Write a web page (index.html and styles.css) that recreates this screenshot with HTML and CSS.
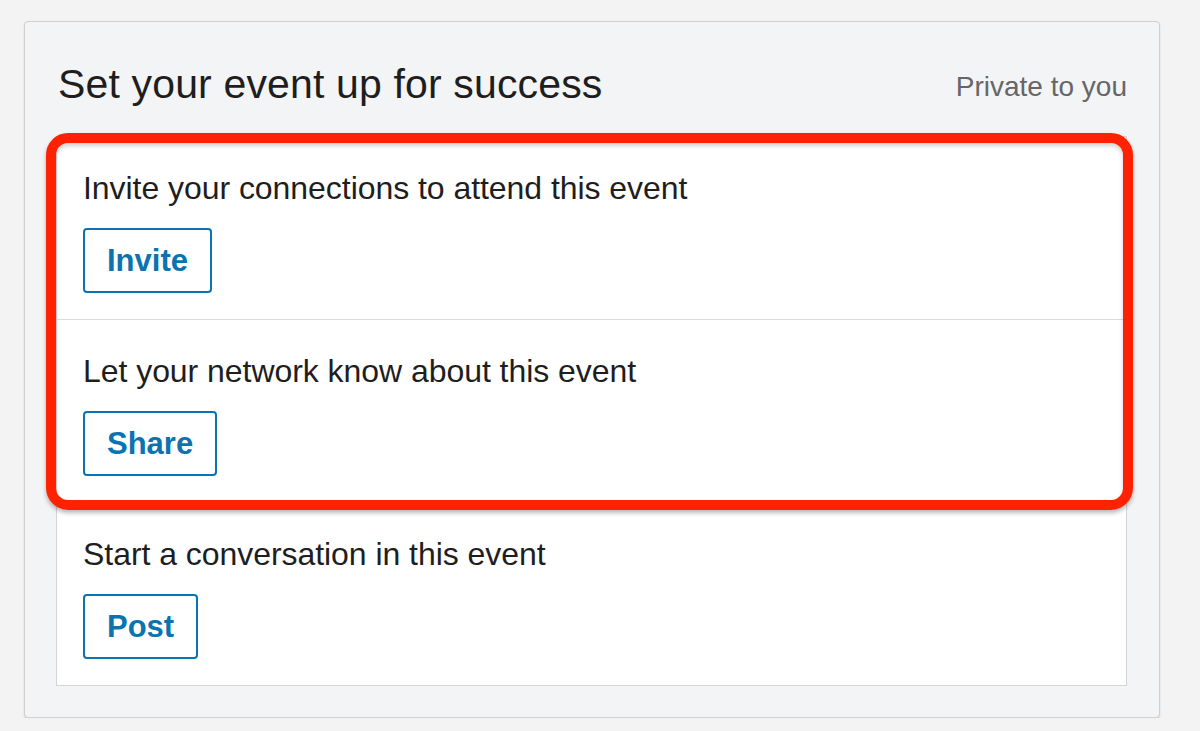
FILE: index.html
```html
<!DOCTYPE html>
<html lang="en">
<head>
<meta charset="utf-8">
<title>Set your event up for success</title>
<link rel="stylesheet" href="styles.css">
</head>
<body>
  <section class="card">
    <header class="card-head">
      <h2 class="card-title">Set your event up for success</h2>
      <span class="card-note">Private to you</span>
    </header>
    <div class="list">
      <div class="highlight" aria-hidden="true"></div>
      <div class="row">
        <p class="row-text">Invite your connections to attend this event</p>
        <button class="btn">Invite</button>
      </div>
      <div class="row">
        <p class="row-text">Let your network know about this event</p>
        <button class="btn">Share</button>
      </div>
      <div class="row">
        <p class="row-text">Start a conversation in this event</p>
        <button class="btn">Post</button>
      </div>
    </div>
  </section>
</body>
</html>
```

FILE: styles.css
```css
html, body {
  margin: 0;
  padding: 0;
  background: #f3f3f3;
}

body {
  padding: 21px 40px 0 24px;
  font-family: "Liberation Sans", Arial, sans-serif;
  color: #1e1e1e;
}

.card {
  box-sizing: border-box;
  width: 1136px;
  background: #f3f4f6;
  border: 1px solid #cfcfcf;
  border-radius: 4px;
  box-shadow: 0 2px 2px rgba(0, 0, 0, 0.12);
  padding: 38px 32px 31px 31px;
}

.card-head {
  display: flex;
  justify-content: space-between;
  align-items: baseline;
  margin-bottom: 28px;
}

.card-title {
  margin: 0 0 0 2px;
  font-size: 41px;
  line-height: 48px;
  font-weight: 400;
  letter-spacing: 0.15px;
  color: #1e1e1e;
}

.card-note {
  font-size: 28px;
  color: #666666;
  position: relative;
  top: -2px;
}

.list {
  position: relative;
  background: #ffffff;
  border: 1px solid #d4d4d4;
}

.row {
  padding: 31px 26px 26px 26px;
  display: flex;
  flex-direction: column;
  align-items: flex-start;
}

.row + .row {
  border-top: 1px solid #dcdcdc;
}

.row-text {
  margin: 0 0 20px 0;
  font-size: 32px;
  line-height: 40px;
  letter-spacing: -0.05px;
  color: #1e1e1e;
}

.btn {
  box-sizing: border-box;
  height: 65px;
  padding: 0 22px;
  display: inline-flex;
  align-items: center;
  background: #ffffff;
  border: 2px solid #0a73b1;
  border-radius: 4px;
  color: #0a73b1;
  font-family: "Liberation Sans", Arial, sans-serif;
  font-size: 31px;
  font-weight: 700;
}

.highlight {
  position: absolute;
  left: -11px;
  top: -4px;
  right: -7px;
  height: 377px;
  box-sizing: border-box;
  border: 10px solid #ff2200;
  border-radius: 22px;
  box-shadow: 0 3px 4px rgba(0, 0, 0, 0.28), inset 0 3px 4px rgba(0, 0, 0, 0.18);
  pointer-events: none;
}
```
